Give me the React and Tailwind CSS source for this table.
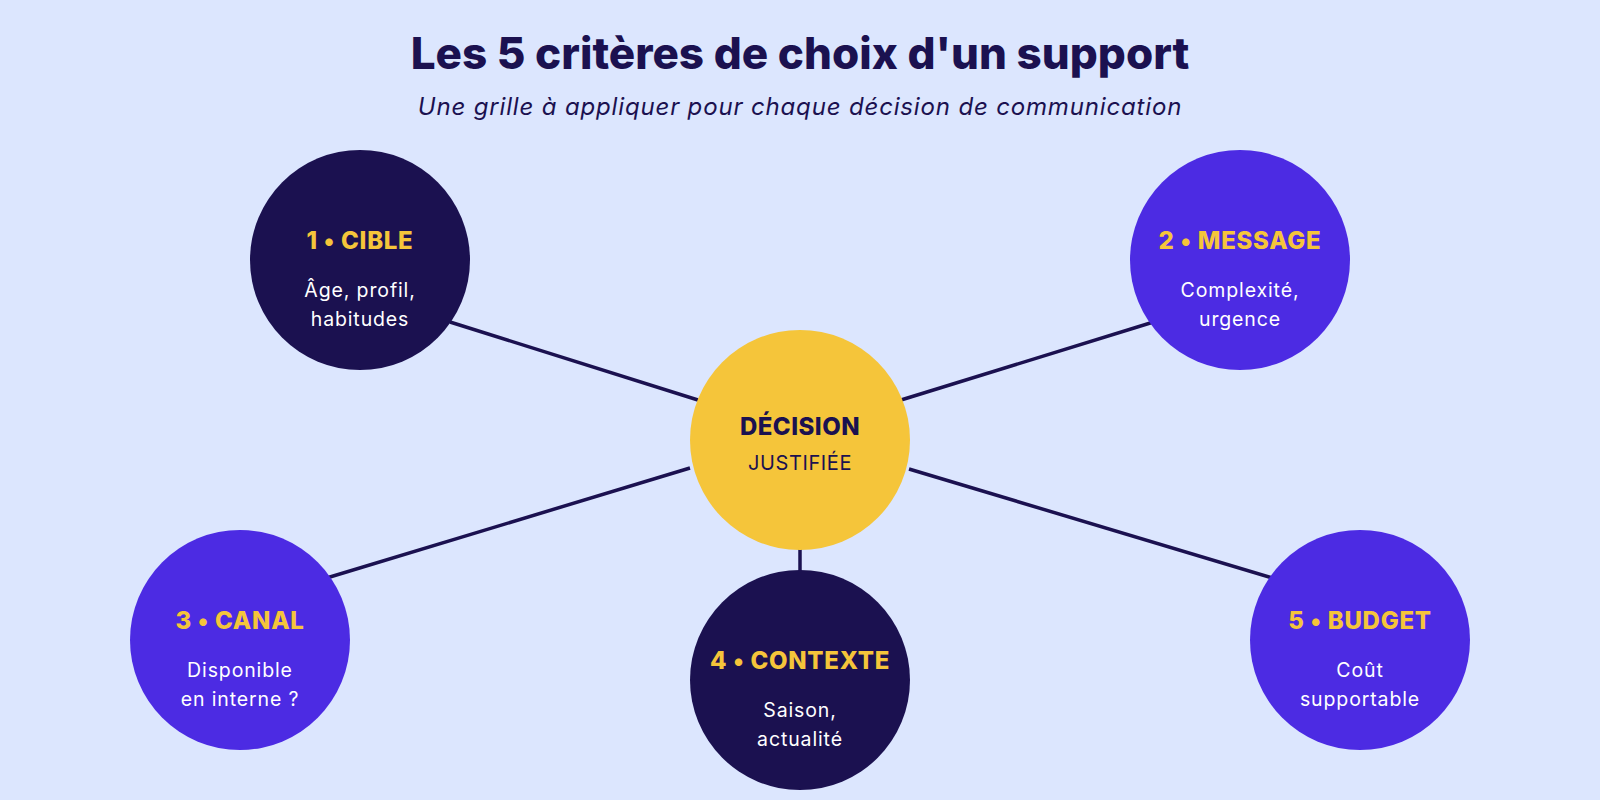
import React from 'react';

const nodes = [
  { label: '1 • CIBLE', lines: ['Âge, profil,', 'habitudes'], pos: 'left-[250px] top-[10px]', bg: 'bg-[#1b1150]' },
  { label: '2 • MESSAGE', lines: ['Complexité,', 'urgence'], pos: 'left-[1130px] top-[10px]', bg: 'bg-[#4c2be3]' },
  { label: '3 • CANAL', lines: ['Disponible', 'en interne ?'], pos: 'left-[130px] top-[390px]', bg: 'bg-[#4c2be3]' },
  { label: '4 • CONTEXTE', lines: ['Saison,', 'actualité'], pos: 'left-[690px] top-[430px]', bg: 'bg-[#1b1150]' },
  { label: '5 • BUDGET', lines: ['Coût', 'supportable'], pos: 'left-[1250px] top-[390px]', bg: 'bg-[#4c2be3]' },
];

// connecteurs, coordonnées dans le canevas du schéma
const links = [
  [450, 182, 698, 260],
  [901, 260, 1160, 180],
  [690, 328, 320, 440],
  [909, 329, 1279, 440],
  [800, 400, 800, 432],
];

const Node = ({ label, lines, pos, bg }) => (
  <div className={`absolute ${pos} w-[220px] h-[220px] rounded-full ${bg} flex flex-col items-center justify-center pt-[40px] text-center`}>
    <div className="text-[24px] leading-[28px] font-extrabold tracking-[0.03em] text-[#f5c53a] whitespace-nowrap">{label}</div>
    <div className="mt-[21px] text-[19.5px] leading-[29px] tracking-[0.045em] text-white">
      {lines.map((l) => (
        <div key={l}>{l}</div>
      ))}
    </div>
  </div>
);

export default function App() {
  return (
    <div className="w-[1600px] h-[800px] bg-[#dce6fe] text-[#1b1150] flex flex-col overflow-hidden" style={{ fontFamily: 'Inter, "Noto Sans", sans-serif' }}>
      <header className="h-[140px] flex flex-col items-center pt-[28px]">
        <h1 className="text-[44px] leading-[50px] font-extrabold">Les 5 critères de choix d'un support</h1>
        <p className="mt-[14px] text-[24px] leading-[30px] italic tracking-[0.035em]">Une grille à appliquer pour chaque décision de communication</p>
      </header>

      <div className="relative flex-1">
        <svg className="absolute inset-0" width="1600" height="660">
          {links.map(([x1, y1, x2, y2], i) => (
            <line key={i} x1={x1} y1={y1} x2={x2} y2={y2} stroke="#1b1150" strokeWidth="3.5" />
          ))}
        </svg>

        <div className="absolute left-[690px] top-[190px] w-[220px] h-[220px] rounded-full bg-[#f5c53a] flex flex-col items-center justify-center pt-[9px] text-center">
          <div className="text-[24px] leading-[30px] font-extrabold tracking-[0.02em]">DÉCISION</div>
          <div className="mt-[7px] text-[20px] leading-[28px] tracking-[0.03em]">JUSTIFIÉE</div>
        </div>

        {nodes.map((n) => (
          <Node key={n.label} {...n} />
        ))}
      </div>
    </div>
  );
}
